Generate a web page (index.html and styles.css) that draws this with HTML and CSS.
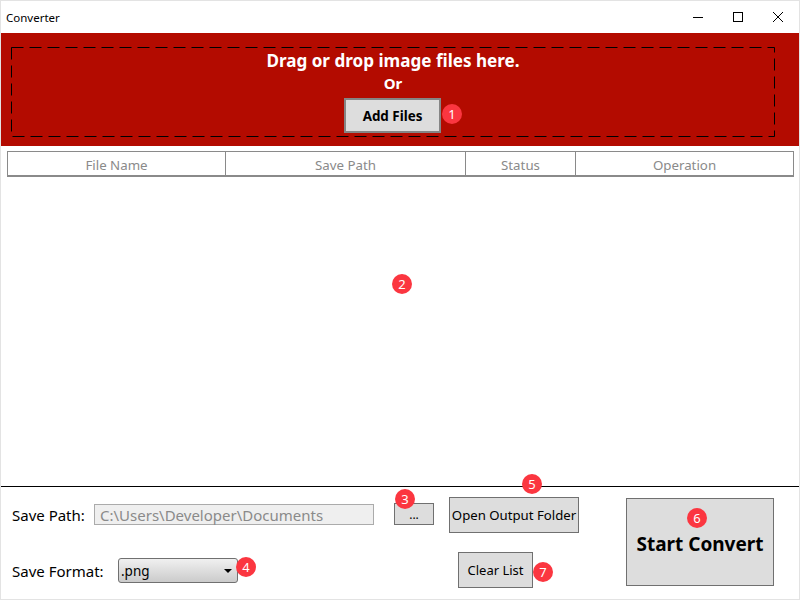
FILE: index.html

```html
<!DOCTYPE html>
<html lang="en">
<head>
    <meta charset="UTF-8">
    <meta name="viewport" content="width=device-width, initial-scale=1.0">
    <title>Converter</title>
    <link rel="stylesheet" href="styles.css">
</head>
<body>
    <div class="window">
        <header class="titlebar">
            <span class="titlebar-name">Converter</span>
            <div class="window-controls">
                <svg class="window-icon" width="12" height="12" viewBox="0 0 12 12"><path d="M1 6.5H11" /></svg>
                <svg class="window-icon" width="12" height="12" viewBox="0 0 12 12"><rect x="1.5" y="1.5" width="9" height="9" /></svg>
                <svg class="window-icon" width="12" height="12" viewBox="0 0 12 12"><path d="M1 1L11 11M11 1L1 11" /></svg>
            </div>
        </header>

        <section class="dropzone">
            <svg class="dropzone-dash" width="764" height="90" viewBox="0 0 764 90">
                <rect x="0.5" y="0.5" width="763" height="89" />
            </svg>
            <h1 class="dropzone-title">Drag or drop image files here.</h1>
            <p class="dropzone-or">Or</p>
            <button class="btn btn-add">Add Files</button>
        </section>

        <div class="file-table">
            <div class="file-head">
                <div class="col col-name">File Name</div>
                <div class="col col-path">Save Path</div>
                <div class="col col-status">Status</div>
                <div class="col col-op">Operation</div>
            </div>
        </div>

        <footer class="bottom">
            <div class="fields">
                <div class="field field-path">
                    <label class="field-label">Save Path:</label>
                    <div class="path-input">C:\Users\Developer\Documents</div>
                </div>
                <div class="field field-format">
                    <label class="field-label">Save Format:</label>
                    <div class="format-select">
                        <span>.png</span>
                        <span class="select-arrow"></span>
                    </div>
                </div>
            </div>
            <button class="btn btn-browse">...</button>
            <div class="actions">
                <button class="btn btn-open">Open Output Folder</button>
                <button class="btn btn-clear">Clear List</button>
            </div>
            <button class="btn btn-start">Start Convert</button>
        </footer>

        <!-- Numbered callouts -->
        <span class="badge badge-1">1</span>
        <span class="badge badge-2">2</span>
        <span class="badge badge-3">3</span>
        <span class="badge badge-4">4</span>
        <span class="badge badge-5">5</span>
        <span class="badge badge-6">6</span>
        <span class="badge badge-7">7</span>
    </div>
</body>
</html>
```

FILE: styles.css

```css
/* Reset and Base Styles */
* {
    margin: 0;
    padding: 0;
    box-sizing: border-box;
}

body {
    font-family: "Noto Sans", "Open Sans", sans-serif;
    color: #000;
    background: #fff;
}

.window {
    position: relative;
    display: flex;
    flex-direction: column;
    width: 800px;
    height: 600px;
    border: 1px solid #e3e3e3;
    overflow: hidden;
}

/* Title Bar */
.titlebar {
    display: flex;
    justify-content: space-between;
    align-items: center;
    height: 32px;
    padding-left: 5px;
}

.titlebar-name {
    font-size: 11.5px;
}

.window-controls {
    display: flex;
    gap: 28px;
    padding-right: 15px;
}

.window-icon {
    fill: none;
    stroke: #000;
    stroke-width: 1;
}

/* Drop Zone */
.dropzone {
    position: relative;
    display: flex;
    flex-direction: column;
    align-items: center;
    height: 113px;
    padding: 15px 14px 0 0;
    background: #b30b00;
    color: #fff;
}

.dropzone-dash {
    position: absolute;
    top: 14px;
    left: 10px;
    fill: none;
    stroke: #000;
    stroke-dasharray: 12 6;
}

.dropzone-title {
    font-size: 17.1px;
    line-height: 25px;
    font-weight: 700;
}

.dropzone-or {
    font-size: 15px;
    line-height: 20px;
    font-weight: 700;
}

/* Buttons */
.btn {
    font-family: inherit;
    color: #000;
    background: #dddddd;
    border: 1px solid #707070;
}

.btn-add {
    width: 97px;
    height: 35px;
    margin: 5px 1px 0 0;
    border: 2px solid #858585;
    font-size: 13.4px;
    font-weight: 700;
}

.btn-browse {
    width: 40px;
    height: 22px;
    margin: 16px 0 0 20px;
    font-size: 12px;
}

.btn-open {
    width: 130px;
    height: 36px;
    font-size: 13.2px;
}

.btn-clear {
    width: 75px;
    height: 36px;
    margin-left: 9px;
    font-size: 13px;
}

.btn-start {
    width: 148px;
    height: 88px;
    margin: 11px 0 0 47px;
    padding-top: 4px;
    font-size: 19px;
    font-weight: 700;
}

/* File List */
.file-table {
    flex: 1;
    padding: 5px 5px 0 6px;
}

.file-head {
    display: flex;
    height: 26px;
    border: 1px solid #8a8a8a;
    border-bottom-width: 2px;
    color: #8a8a8a;
    font-size: 13.3px;
}

.col {
    display: flex;
    align-items: center;
    justify-content: center;
    padding-top: 2px;
    border-right: 1px solid #8a8a8a;
}

.col-name {
    width: 218px;
}

.col-path {
    width: 240px;
}

.col-status {
    width: 110px;
}

.col-op {
    flex: 1;
    border-right: none;
}

/* Bottom Panel */
.bottom {
    display: flex;
    align-items: flex-start;
    height: 113px;
    padding: 0 0 0 11px;
    border-top: 1px solid #000;
}

.fields {
    display: flex;
    flex-direction: column;
    width: 362px;
    padding-top: 17px;
}

.field {
    display: flex;
    align-items: center;
    font-size: 15px;
}

.field-path .field-label {
    width: 82px;
}

.field-format {
    margin-top: 33px;
}

.field-format .field-label {
    width: 106px;
}

.path-input {
    display: flex;
    align-items: center;
    width: 280px;
    height: 21px;
    padding-left: 5px;
    background: #efefef;
    border: 1px solid #ababab;
    color: #8a8a8a;
    font-size: 15px;
}

.format-select {
    display: flex;
    justify-content: space-between;
    align-items: center;
    width: 120px;
    height: 25px;
    padding: 0 5px 0 2px;
    background: linear-gradient(#f0f0f0, #cbcbcb);
    border: 1px solid #707070;
    border-radius: 3px;
    font-size: 13.5px;
}

.select-arrow {
    width: 0;
    height: 0;
    border-left: 4px solid transparent;
    border-right: 4px solid transparent;
    border-top: 4px solid #000;
}

.actions {
    display: flex;
    flex-direction: column;
    align-items: flex-start;
    gap: 19px;
    width: 130px;
    margin: 10px 0 0 15px;
}

/* Badges */
.badge {
    position: absolute;
    display: flex;
    align-items: center;
    justify-content: center;
    width: 20px;
    height: 20px;
    border-radius: 50%;
    background: #fb3640;
    color: #fff;
    font-size: 13px;
}

.badge-1 { left: 441px; top: 103px; }
.badge-2 { left: 391px; top: 273px; }
.badge-3 { left: 394px; top: 488px; }
.badge-4 { left: 235px; top: 556px; }
.badge-5 { left: 521px; top: 473px; }
.badge-6 { left: 686px; top: 507px; }
.badge-7 { left: 532px; top: 561px; }
```
